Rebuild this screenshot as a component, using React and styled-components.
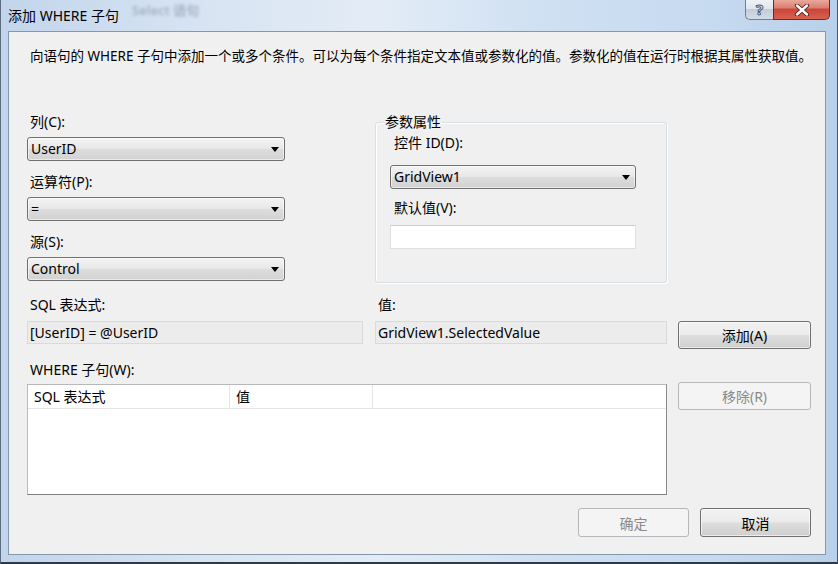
import React from "react";
import styled, { createGlobalStyle } from "styled-components";

const FONT = `"Noto Sans", "Noto Sans CJK SC", sans-serif`;

const GlobalStyle = createGlobalStyle`
  html, body { margin: 0; padding: 0; width: 838px; height: 564px; overflow: hidden; background: #c9d9ec; }
  #root { width: 838px; height: 564px; }
  * { box-sizing: border-box; }
`;

const Window = styled.div`
  width: 838px;
  height: 564px;
  display: flex;
  flex-direction: column;
  padding: 0 7px 7px 7px;
  background: linear-gradient(90deg, #c2d5ec 0%, #d8e4f2 25%, #e3ecf6 45%, #cfe0f3 65%, #c6daf0 85%, #b9d0ea 100%);
  border-left: 1px solid #5d6d80;
  border-right: 1px solid #4a5869;
  border-bottom: 2px solid #2f3a47;
  font-family: ${FONT};
  font-size: 14px;
  color: #000;
`;

const TitleBar = styled.div`
  position: relative;
  height: 31px;
  flex: none;
  display: flex;
  align-items: flex-start;
`;

const Title = styled.div`
  margin-top: 6px;
  line-height: 20px;
  font-size: 14px;
  color: #000;
  position: relative;
  z-index: 1;
`;

const Ghost = styled.div`
  position: absolute;
  left: 124px;
  top: 3px;
  line-height: 14px;
  font-size: 13px;
  font-weight: 600;
  color: rgba(70, 85, 110, 0.33);
  filter: blur(1.4px);
`;

const CaptionButtons = styled.div`
  margin-left: auto;
  display: flex;
`;

const HelpButton = styled.div`
  width: 28px;
  height: 20px;
  display: flex;
  align-items: center;
  justify-content: center;
  border: 1px solid #6f8092;
  border-top: none;
  border-right: none;
  border-radius: 0 0 0 5px;
  background: linear-gradient(to bottom, #eef2f6 0%, #dfe6ee 45%, #c3ccd7 50%, #d3dce6 100%);
  font-size: 15px;
  font-weight: 700;
  color: #fff;
  -webkit-text-stroke: 1px #4a5666;
  line-height: 1;
`;

const CloseButton = styled.div`
  width: 57px;
  height: 20px;
  display: flex;
  align-items: center;
  justify-content: center;
  border: 1px solid #6b2a24;
  border-top: none;
  border-radius: 0 0 5px 0;
  background: linear-gradient(to bottom, #e9a89c 0%, #dc7f70 40%, #c9463a 50%, #d8614f 100%);
`;

const Client = styled.div`
  flex: 1;
  margin-right: 4px;
  background: #f0f0f0;
  border: 1px solid #8597ab;
  display: flex;
  flex-direction: column;
  padding: 14px 14px 0 18px;
`;

const Description = styled.div`
  padding-left: 3px;
  line-height: 20px;
  font-size: 13.5px;
  white-space: nowrap;
`;

const Form = styled.div`
  margin-top: 46px;
  display: grid;
  grid-template-columns: 336px 12px 292px 11px 133px;
  align-items: start;
`;

const LeftStack = styled.div`
  grid-column: 1;
  grid-row: 1;
  display: flex;
  flex-direction: column;
  gap: 11px;
`;

const Field = styled.div`
  display: flex;
  flex-direction: column;
`;

const Label = styled.div`
  line-height: 20px;
  padding-left: ${(p) => p.$indent ?? 3}px;
  margin-top: ${(p) => p.$mt || 0}px;
  margin-bottom: ${(p) => p.$mb || 0}px;
  grid-column: ${(p) => p.$col || "auto"};
  grid-row: ${(p) => p.$row || "auto"};
  white-space: nowrap;
`;

const Combo = styled.div`
  height: 24px;
  width: ${(p) => p.$w}px;
  margin-top: ${(p) => p.$mt || 0}px;
  display: flex;
  align-items: center;
  justify-content: space-between;
  padding: 0 5px 0 3px;
  border: 1px solid #707070;
  border-radius: 3px;
  background: linear-gradient(to bottom, #f3f3f3 0%, #e8e8e8 48%, #dcdcdc 52%, #d2d2d2 100%);
  box-shadow: inset 0 0 0 1px rgba(255, 255, 255, 0.55);
  line-height: 20px;
`;

const Group = styled.fieldset`
  grid-column: 3;
  grid-row: 1;
  margin: 0;
  height: 171px;
  padding: 0 0 0 8px;
  border: 1px solid #d5dfe5;
  border-radius: 3px;
  box-shadow: inset 1px 1px 0 #fff, 1px 1px 0 #fff;
`;

const Legend = styled.legend`
  padding: 0 1px;
  line-height: 20px;
  font-size: 14px;
`;

const GroupBody = styled.div`
  padding-left: 6px;
  padding-top: 1px;
  display: flex;
  flex-direction: column;
`;

const TextInput = styled.div`
  width: 246px;
  height: 24px;
  margin-top: 7px;
  background: #fff;
  border: 1px solid #dcdfe3;
  border-top-color: #c9ccd1;
`;

const ReadOnly = styled.div`
  grid-column: ${(p) => p.$col};
  grid-row: 3;
  margin-top: 6px;
  height: 23px;
  padding-left: 2px;
  line-height: 21px;
  background: #ececec;
  border: 1px solid #dadada;
  white-space: nowrap;
`;

const Button = styled.button`
  grid-column: ${(p) => p.$col || "auto"};
  grid-row: ${(p) => p.$row || "auto"};
  margin-top: ${(p) => p.$mt || 0}px;
  width: ${(p) => p.$w}px;
  height: ${(p) => p.$h || 29}px;
  padding: 0;
  font-family: ${FONT};
  font-size: 14px;
  border-radius: 3px;
  border: 1px solid ${(p) => (p.disabled ? "#b4b8bb" : "#707070")};
  color: ${(p) => (p.disabled ? "#8a8a8a" : "#000")};
  background: ${(p) =>
    p.disabled
      ? "#f4f4f4"
      : "linear-gradient(to bottom, #f2f2f2 0%, #ebebeb 48%, #dddddd 52%, #cfcfcf 100%)"};
  box-shadow: ${(p) => (p.disabled ? "none" : "inset 0 0 0 1px rgba(255,255,255,0.6)")};
`;

const List = styled.div`
  grid-column: 1 / 4;
  grid-row: 5;
  margin-top: 4px;
  height: 111px;
  background: #fff;
  border: 1px solid #b8b8b8;
  border-bottom-color: #7e7e7e;
  border-right-color: #8a8a8a;
`;

const HeaderRow = styled.div`
  display: flex;
  height: 24px;
  border-bottom: 1px solid #e5e5e5;
`;

const HeaderCell = styled.div`
  width: ${(p) => (p.$w ? `${p.$w}px` : "auto")};
  flex: ${(p) => (p.$w ? "none" : "1")};
  padding-left: 6px;
  line-height: 23px;
  border-right: ${(p) => (p.$w ? "1px solid #e5e5e5" : "none")};
  white-space: nowrap;
`;

const Footer = styled.div`
  margin-top: 13px;
  display: flex;
  justify-content: flex-end;
  gap: 11px;
`;

const Arrow = () => (
  <svg width="8" height="5" viewBox="0 0 8 5">
    <polygon points="0,0 8,0 4,5" fill="#000" />
  </svg>
);

const CloseX = () => (
  <svg width="16" height="12" viewBox="0 0 16 12">
    <path d="M3 1.5 L13 10.5 M13 1.5 L3 10.5" stroke="#5a1a14" strokeWidth="4.2" strokeLinecap="round" />
    <path d="M3 1.5 L13 10.5 M13 1.5 L3 10.5" stroke="#fff" strokeWidth="2.4" strokeLinecap="round" />
  </svg>
);

const ComboField = ({ label, value, width }) => (
  <Field>
    <Label $mb={5}>{label}</Label>
    <Combo $w={width}>
      <span>{value}</span>
      <Arrow />
    </Combo>
  </Field>
);

export default function App() {
  return (
    <>
      <GlobalStyle />
      <Window>
        <TitleBar>
          <Ghost>Select 语句</Ghost>
          <Title>添加 WHERE 子句</Title>
          <CaptionButtons>
            <HelpButton>?</HelpButton>
            <CloseButton>
              <CloseX />
            </CloseButton>
          </CaptionButtons>
        </TitleBar>
        <Client>
          <Description>
            向语句的 WHERE 子句中添加一个或多个条件。可以为每个条件指定文本值或参数化的值。参数化的值在运行时根据其属性获取值。
          </Description>
          <Form>
            <LeftStack>
              <ComboField label="列(C):" value="UserID" width={258} />
              <ComboField label="运算符(P):" value="=" width={258} />
              <ComboField label="源(S):" value="Control" width={258} />
            </LeftStack>
            <Group>
              <Legend>参数属性</Legend>
              <GroupBody>
                <Label $indent={4}>控件 ID(D):</Label>
                <Combo $w={246} $mt={12}>
                  <span>GridView1</span>
                  <Arrow />
                </Combo>
                <Label $indent={4} $mt={9}>默认值(V):</Label>
                <TextInput />
              </GroupBody>
            </Group>

            <Label $col={1} $row={2} $mt={12}>SQL 表达式:</Label>
            <Label $col={3} $row={2} $mt={12}>值:</Label>

            <ReadOnly $col={1}>[UserID] = @UserID</ReadOnly>
            <ReadOnly $col={3}>GridView1.SelectedValue</ReadOnly>
            <Button $col={5} $row={3} $mt={6} $w={133} $h={28}>添加(A)</Button>

            <Label $col="1 / 4" $row={4} $mt={11}>WHERE 子句(W):</Label>

            <List>
              <HeaderRow>
                <HeaderCell $w={202}>SQL 表达式</HeaderCell>
                <HeaderCell $w={143}>值</HeaderCell>
                <HeaderCell />
              </HeaderRow>
            </List>
            <Button $col={5} $row={5} $mt={2} $w={133} $h={28} disabled>移除(R)</Button>
          </Form>
          <Footer>
            <Button $w={111} disabled>确定</Button>
            <Button $w={111}>取消</Button>
          </Footer>
        </Client>
      </Window>
    </>
  );
}
